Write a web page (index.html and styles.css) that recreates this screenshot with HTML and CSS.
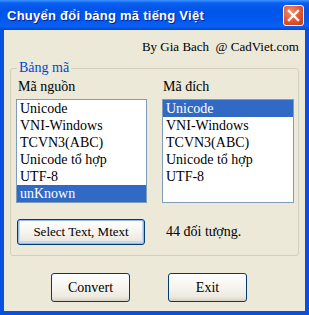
FILE: index.html
```html
<!DOCTYPE html>
<html lang="vi">

<head>
    <meta charset="UTF-8">
    <meta name="viewport" content="width=device-width, initial-scale=1.0">
    <title>Chuyển đổi bảng mã tiếng Việt</title>
    <link rel="stylesheet" href="styles.css">
</head>

<body>

    <div class="window">
        <div class="titlebar">
            <span class="title">Chuyển đổi bảng mã tiếng Việt</span>
            <div class="close">
                <svg width="13" height="13" viewBox="0 0 13 13">
                    <path d="M2 2 L11 11 M11 2 L2 11" stroke="#fff" stroke-width="2.4" stroke-linecap="square" />
                </svg>
            </div>
        </div>

        <div class="client">
            <div class="credit">By Gia Bach &nbsp;@ CadViet.com</div>

            <fieldset class="group">
                <legend>Bảng mã</legend>
                <div class="lists">
                    <div class="col">
                        <div class="label">Mã nguồn</div>
                        <ul class="listbox">
                            <li>Unicode</li>
                            <li>VNI-Windows</li>
                            <li>TCVN3(ABC)</li>
                            <li>Unicode tổ hợp</li>
                            <li>UTF-8</li>
                            <li class="selected">unKnown</li>
                        </ul>
                    </div>
                    <div class="col">
                        <div class="label">Mã đích</div>
                        <ul class="listbox">
                            <li class="selected">Unicode</li>
                            <li>VNI-Windows</li>
                            <li>TCVN3(ABC)</li>
                            <li>Unicode tổ hợp</li>
                            <li>UTF-8</li>
                        </ul>
                    </div>
                </div>
                <div class="select-row">
                    <button class="btn btn-select">Select Text, Mtext</button>
                    <span class="count">44 đối tượng.</span>
                </div>
            </fieldset>

            <div class="actions">
                <button class="btn btn-action">Convert</button>
                <button class="btn btn-action">Exit</button>
            </div>
        </div>
    </div>

</body>

</html>
```

FILE: styles.css
```css
* {
    margin: 0;
    padding: 0;
    box-sizing: border-box;
}

body {
    background: #ece9d8;
    font-family: "Liberation Serif", "Times New Roman", serif;
}

.window {
    display: flex;
    flex-direction: column;
    width: 309px;
    height: 315px;
    background: #0a50e0;
}

/* title bar */
.titlebar {
    display: flex;
    align-items: center;
    justify-content: space-between;
    height: 30px;
    padding: 0 5px 0 7px;
    background: linear-gradient(to bottom, #3d95ff 0, #0a5ff0 3px, #0055e8 10px, #0058ee 20px, #0a60f5 26px, #0048d8 30px);
}

.title {
    color: #fff;
    font-family: "Liberation Sans", Arial, sans-serif;
    font-weight: bold;
    font-size: 13px;
    letter-spacing: 0.25px;
    text-shadow: 1px 1px 0 #0a1f8a;
}

.close {
    display: flex;
    align-items: center;
    justify-content: center;
    width: 21px;
    height: 21px;
    border: 1px solid #fff;
    border-radius: 3px;
    background: radial-gradient(circle at 35% 30%, #f0906a 0, #e0532e 55%, #c23b16 100%);
}

/* client area */
.client {
    display: flex;
    flex-direction: column;
    flex: 1;
    margin: 0 4px 4px;
    padding: 0 6px;
    background: #ece9d8;
}

.credit {
    padding-top: 9px;
    font-size: 13px;
    line-height: 16px;
    text-align: right;
}

.group {
    margin-top: 5px;
    padding: 0 4px 10px 5px;
    border: 1px solid #d0d0bf;
    border-radius: 3px;
}

.group legend {
    margin-left: 1px;
    padding: 0 2px;
    color: #0046d5;
    font-size: 14px;
    line-height: 16px;
}

.lists {
    display: grid;
    grid-template-columns: 131px 132px;
    column-gap: 15px;
}

.label {
    margin-top: 3px;
    padding-left: 2px;
    font-size: 14px;
    line-height: 16px;
}

.col:last-child .label {
    padding-left: 1px;
}

.listbox {
    list-style: none;
    height: 104px;
    margin-top: 4px;
    border: 1px solid #7f9db9;
    background: #fff;
}

.listbox li {
    height: 17px;
    padding-left: 3px;
    font-size: 14px;
    line-height: 17px;
}

.listbox .selected {
    background: #316ac5;
    color: #fff;
}

.select-row {
    display: grid;
    grid-template-columns: 131px 132px;
    column-gap: 15px;
    align-items: center;
    margin-top: 16px;
}

.count {
    padding-left: 4px;
    font-size: 14px;
}

/* buttons */
.btn {
    border: 1px solid #003c74;
    border-radius: 3px;
    background: linear-gradient(to bottom, #ffffff 0, #f5f4ee 50%, #ece9e0 85%, #d6d0c5 100%);
    font-family: "Liberation Serif", "Times New Roman", serif;
    color: #000;
}

.btn-select {
    width: 128px;
    height: 26px;
    margin-left: 1px;
    font-size: 13px;
    box-shadow: inset 0 0 0 1px #98b8ea, inset 0 -1px 0 2px #c5d8f6;
}

.actions {
    display: flex;
    gap: 38px;
    margin-top: 17px;
    padding-left: 41px;
}

.btn-action {
    width: 79px;
    height: 29px;
    font-size: 14px;
}
```
